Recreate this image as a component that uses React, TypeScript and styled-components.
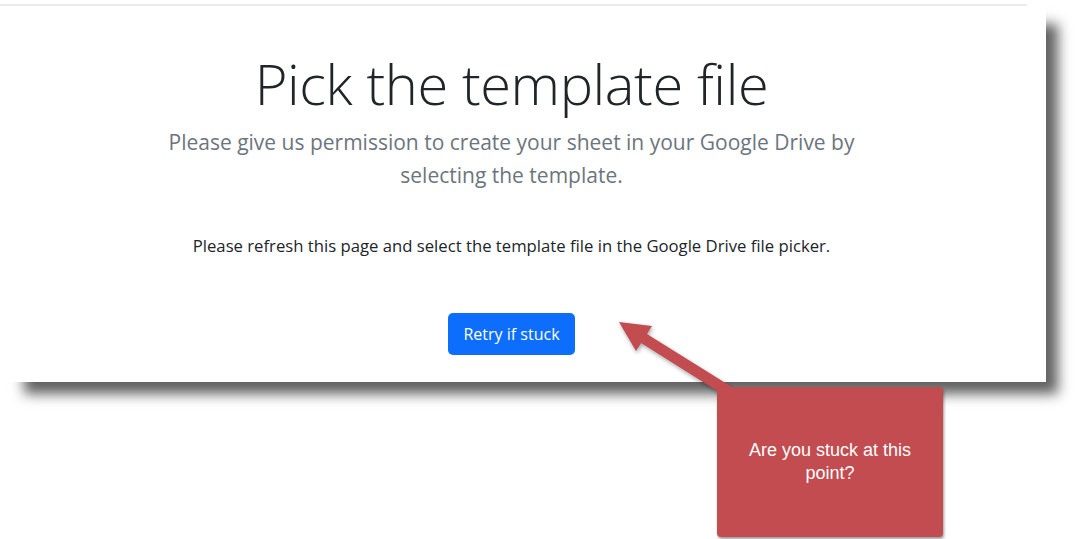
import React from "react";
import styled, { createGlobalStyle } from "styled-components";

const Global = createGlobalStyle`
  html, body {
    margin: 0;
    padding: 0;
    background: #ffffff;
  }
  body {
    font-family: "Open Sans", "Noto Sans", sans-serif;
    color: #212529;
    -webkit-font-smoothing: antialiased;
  }
`;

const Stage = styled.div`
  position: relative;
  width: 1087px;
  height: 539px;
  overflow: hidden;
  background: #ffffff;
`;

const Card = styled.section`
  width: 1046px;
  height: 382px;
  box-sizing: border-box;
  background: #ffffff;
  box-shadow: 18px 18px 12px -6px rgba(0, 0, 0, 0.62);
  padding-top: 4px;
`;

const TopRule = styled.div`
  width: 1027px;
  height: 2px;
  background: #ebebeb;
`;

const Content = styled.div`
  width: 1023px;
  display: flex;
  flex-direction: column;
  align-items: center;
  text-align: center;
`;

const Title = styled.h1`
  margin: 44px 0 0;
  font-size: 56px;
  line-height: 67px;
  font-weight: 300;
  letter-spacing: -0.4px;
  color: #212529;
`;

const Lead = styled.p`
  margin: 9px 0 0;
  width: 720px;
  font-size: 21px;
  line-height: 33px;
  font-weight: 400;
  color: #6c757d;
`;

const Note = styled.p`
  margin: 42px 0 0;
  font-size: 16.7px;
  line-height: 24px;
  color: #212529;
`;

const RetryButton = styled.button`
  margin-top: 55px;
  height: 42px;
  padding: 0 15px;
  border: none;
  border-radius: 5px;
  background: #0d6efd;
  color: #ffffff;
  font-family: "Open Sans", "Noto Sans", sans-serif;
  font-size: 16px;
  line-height: 24px;
  cursor: pointer;
`;

const ArrowLayer = styled.svg`
  position: absolute;
  left: 0;
  top: 0;
  width: 1087px;
  height: 539px;
  pointer-events: none;
  filter: drop-shadow(1px 2px 2px rgba(0, 0, 0, 0.35));
`;

const Callout = styled.div`
  position: absolute;
  left: 717px;
  top: 387px;
  width: 226px;
  height: 150px;
  box-sizing: border-box;
  padding: 0 24px;
  background: #c24c50;
  border-radius: 4px;
  box-shadow: 1px 2px 3px rgba(0, 0, 0, 0.4);
  display: flex;
  align-items: center;
  justify-content: center;
  text-align: center;
  color: #ffffff;
  font-family: "Liberation Sans", Arial, sans-serif;
  font-size: 18px;
  line-height: 23px;
`;

export default function App() {
  return (
    <Stage>
      <Global />
      <Card>
        <TopRule />
        <Content>
          <Title>Pick the template file</Title>
          <Lead>
            Please give us permission to create your sheet in your Google Drive by selecting the template.
          </Lead>
          <Note>
            Please refresh this page and select the template file in the Google Drive file picker.
          </Note>
          <RetryButton>Retry if stuck</RetryButton>
        </Content>
      </Card>
      <ArrowLayer viewBox="0 0 1087 539">
        <polygon
          fill="#c24c50"
          points="619,322 652,326 646.9,333.9 731.9,387.1 726.1,396.4 641.1,343.1 636,351"
        />
      </ArrowLayer>
      <Callout>Are you stuck at this point?</Callout>
    </Stage>
  );
}
